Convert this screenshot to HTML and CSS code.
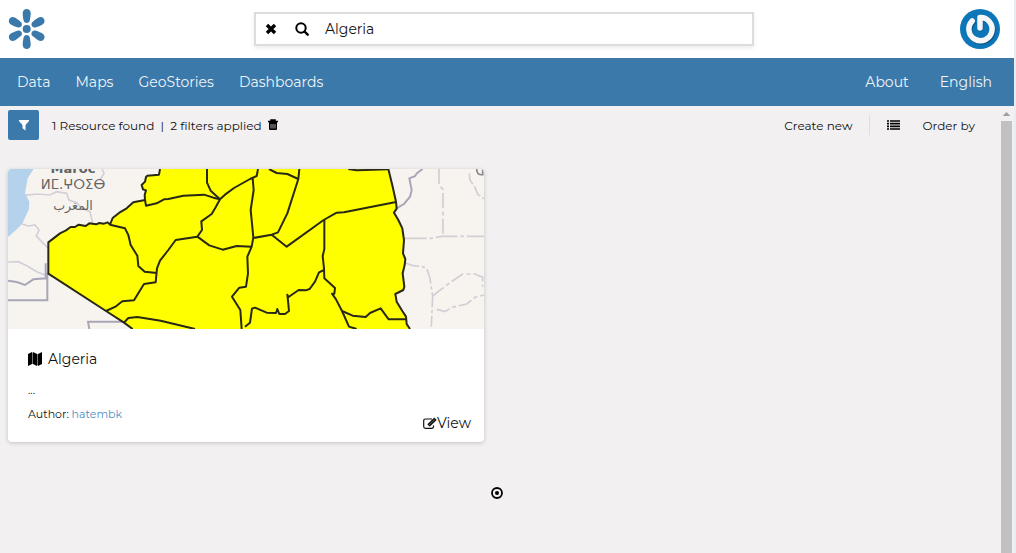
FILE: index.html
```html
<!DOCTYPE html>
<html lang="en">
<head>
<meta charset="utf-8">
<title>GeoNode</title>
<link rel="stylesheet" href="styles.css">
</head>
<body>
<div class="page">
  <header class="brand-bar">
    <a class="logo" href="#" aria-label="GeoNode home">
      <svg viewBox="0 0 38 40" width="38" height="40" fill="#3a79aa">
        <circle cx="18.700" cy="20" r="4"/>
        <g>
          <path id="petal" d="M14.700 4.500C14.500-1.500 22.900-1.500 22.700 4.500C22.700 7 22.300 8.500 21.900 11C21.500 15 15.900 15 15.500 11C15.100 8.500 14.700 7 14.700 4.500Z"/>
          <use href="#petal" transform="rotate(60 18.700 20)"/>
          <use href="#petal" transform="rotate(120 18.700 20)"/>
          <use href="#petal" transform="rotate(180 18.700 20)"/>
          <use href="#petal" transform="rotate(240 18.700 20)"/>
          <use href="#petal" transform="rotate(300 18.700 20)"/>
        </g>
      </svg>
    </a>
    <form class="search" role="search">
      <button class="icon-button" type="button" aria-label="Clear search">
        <svg viewBox="0 0 12 12" width="12" height="12"><path d="M2 2L10 10M10 2L2 10" stroke="#000" stroke-width="3.4"/></svg>
      </button>
      <button class="icon-button" type="submit" aria-label="Search">
        <svg viewBox="0 0 14 14" width="14" height="14" fill="none" stroke="#000"><circle cx="6" cy="6" r="4.7" stroke-width="2"/><path d="M9.500 9.500L12.700 12.700" stroke-width="2.400" stroke-linecap="round"/></svg>
      </button>
      <input class="search-input" type="text" value="Algeria" aria-label="Search resources">
    </form>
    <a class="avatar" href="#" aria-label="User profile">
      <svg viewBox="0 0 40 40" width="40" height="40">
        <circle cx="20" cy="20" r="20" fill="#0d76b8"/>
        <g fill="none" stroke-width="5.500" stroke-linecap="round" stroke-linejoin="round">
          <path d="M12.500 12.500A11.600 11.600 0 1 0 20 9V19" stroke="#07568c" transform="translate(.5 .8)"/>
          <path d="M12.200 12A11.600 11.600 0 1 0 20 8.500V19" stroke="#f7f7f7"/>
        </g>
      </svg>
    </a>
  </header>

  <nav class="menu-bar" aria-label="Main">
    <div class="menu-group">
      <a href="#">Data</a><a href="#">Maps</a><a href="#">GeoStories</a><a href="#">Dashboards</a>
    </div>
    <div class="menu-group menu-group-end">
      <a href="#">About</a><a href="#">English</a>
    </div>
  </nav>

  <div class="body-row">
    <main class="content">
      <div class="toolbar">
        <button class="filter-button" type="button" aria-label="Filters">
          <svg viewBox="0 0 12 12" width="12" height="12"><path d="M1.200 1H10.800Q11.500 1.500 10.900 2.200L7.500 6V11.500L4.500 9.200V6L1.100 2.200Q.5 1.500 1.200 1Z" fill="#fff"/></svg>
        </button>
        <div class="result-info">
          <span>1 Resource found</span><span class="pipe">|</span><span>2 filters applied</span>
          <button class="icon-button trash-button" type="button" aria-label="Clear filters">
            <svg viewBox="0 0 10 12" width="10" height="12"><path d="M3 2V1H7V2M0 2.500H10" fill="none" stroke="#000" stroke-width="1.500"/><path d="M1 3H9V10Q9 11 8 11H2Q1 11 1 10Z"/><path d="M3 5V9.500M5 5V9.500M7 5V9.500" stroke="#f2f0f1" stroke-width=".7"/></svg>
          </button>
        </div>
        <div class="tools">
          <button class="text-button create-button" type="button">Create new</button>
          <button class="icon-button list-button" type="button" aria-label="List view">
            <svg viewBox="0 0 13 10" width="13" height="10"><path d="M0 1H2M0 3.700H2M0 6.400H2M0 9H2M3 1H13M3 3.700H13M3 6.400H13M3 9H13" stroke="#000" stroke-width="1.700"/></svg>
          </button>
          <button class="text-button" type="button">Order by</button>
        </div>
      </div>

      <div class="card-grid">
        <article class="card">
          <svg class="card-map" viewBox="24 27 1428 480" preserveAspectRatio="xMidYMid slice" role="img" aria-label="Map of Algeria">
            <rect x="24" y="27" width="1428" height="480" fill="#f7f4f0"/>
            <path d="M24 27H101L83 55L75 100L88 125L87 148L66 192L48 210L24 231Z" fill="#b4d2ec"/>
            <g fill="none" stroke="#d3cfd8" stroke-width="5">
              <path d="M75 106L110 102L150 105L170 95L200 100L207 120L230 128L245 145L270 155L278 190M66 192L85 198L105 195L117 210L109 228L125 245L145 265M24 306L55 305L82 318L110 335L143 348"/>
              <path d="M300 60L312 40L306 27"/>
            </g>
            <g fill="none" stroke="#aaa6b8" stroke-width="6">
              <path d="M137 310V355L100 358L75 375L50 366L24 362M142 340V421H24M268 507L264 485H372"/>
              <path d="M1268 27L1250 40L1246 48L1228 55L1235 90L1230 110L1212 132L1188 146"/>
            </g>
            <g fill="none" stroke="#d1ced3" stroke-width="5">
              <path d="M1317 27V75L1329 88V229" stroke-dasharray="45 10 12 10"/>
              <path d="M1215 235H1292L1325 229H1452" stroke-dasharray="65 9 10 9"/>
              <path d="M1214 308L1240 317L1268 320L1281 327L1290 355L1298 408L1294 500" stroke-dasharray="45 8 10 8"/>
              <path d="M1298 408L1340 375L1388 342L1425 342L1448 352V380M1310 448L1335 455L1355 442L1400 432L1425 412L1452 405" stroke-dasharray="42 9 12 9"/>
              <path d="M1408 40L1410 60L1425 82L1433 103L1452 116" stroke-dasharray="35 8"/>
            </g>
            <g class="map-label" fill="#646464">
              <text x="219" y="40" font-size="39" font-weight="bold" text-anchor="middle">Maroc</text>
              <text x="219" y="87" font-size="40" text-anchor="middle">ⵍⵎ.ⵖⵔⵉⴱ</text>
              <text x="219" y="151" font-size="38" text-anchor="middle">المغرب</text>
            </g>
            <path d="M1430 27Q1430 46 1448 44V27" fill="none" stroke="#888" stroke-width="5"/>
            <path d="M480 27L477 44L442 47L438 51L435 65L425 75L429 88L438 91L434 105L435 120L400 127L380 145L358 158L338 174L330 194L323 187L312 191L298 189L288 193L268 190L257 198L236 194L225 201L212 201L198 211L180 220L145 247V341L318 453L372 488L398 507H1230L1220 492L1218 470L1207 453L1190 425L1186 402L1210 390L1213 380L1208 340L1214 315L1216 297L1209 280L1212 240L1207 205L1195 180L1182 158L1190 146L1188 125L1178 80L1165 27Z" fill="#ff0"/>
            <g fill="none" stroke="#282814" stroke-width="6" stroke-linejoin="round">
              <path d="M480 27L477 44L442 47L438 51L435 65L425 75L429 88L438 91L434 105L435 120L400 127L380 145L358 158L338 174L330 194L323 187L312 191L298 189L288 193L268 190L257 198L236 194L225 201L212 201L198 211L180 220L145 247V341L318 453L372 488L398 507M1230 507L1220 492L1218 470L1207 453L1190 425L1186 402L1210 390L1213 380L1208 340L1214 315L1216 297L1209 280L1212 240L1207 205L1195 180L1182 158L1190 146L1188 125L1178 80L1165 27"/>
              <path d="M435 120L438 137L470 130L492 118L505 117L550 107L612 104L640 113L660 118L675 104L702 84L750 57L770 48L774 27"/>
              <path d="M621 27V68L632 92L660 118L647 142L635 162L604 184L606 210L592 230L527 240L505 270L480 302L471 325L467 367L432 372L402 421L367 424L348 439L318 453"/>
              <path d="M330 194L375 205L385 225L392 255L412 287L415 318L434 335L471 339"/>
              <path d="M592 230L628 256L668 269L710 258L755 260"/>
              <path d="M758 55L761 90L752 150L760 232L755 260L742 290L744 340L738 380L718 383L696 410L721 450L725 507"/>
              <path d="M807 27L830 39L862 42L895 57L898 27M895 57L862 160L834 217L815 224L760 234M815 224L860 260L971 180L1010 158L1032 157L1188 126M1045 27L1070 31L1165 28"/>
              <path d="M973 180V268L968 288L972 325L973 355L1005 384L1003 401L996 401L1008 418L1026 453L1047 500L1070 507"/>
              <path d="M972 330L957 337L945 365L929 387L917 391L896 390L870 408L865 412L862 404L864 422L867 453L855 462L838 462L832 447L828 459L800 458L765 443L756 446L750 488L735 500"/>
              <path d="M1026 453L1058 467L1097 471L1110 459L1142 445L1166 478H1218M372 488L385 474L412 471L482 482L585 507"/>
            </g>
          </svg>
          <div class="card-body">
            <h2 class="card-title">
              <svg viewBox="0 0 14 14" width="14" height="14" aria-hidden="true"><path d="M0 2L4 0V12L0 14ZM5 0L9 2V14L5 12ZM10 2L14 0V12L10 14Z"/><path d="M4.500.5V12M9.500 2V13.500" stroke="#555" stroke-width=".8"/></svg>
              <a href="#">Algeria</a>
            </h2>
            <p class="card-summary">...</p>
            <div class="card-footer">
              <p class="card-author">Author: <a href="#">hatembk</a></p>
              <a class="view-link" href="#">
                <svg viewBox="0 0 14 13" width="14" height="13" fill="none" stroke="#111" aria-hidden="true"><path d="M9 2H2.500Q.7 2 .7 3.800V9.500Q.7 11.300 2.500 11.300H8.500Q10.500 11.300 10.500 9.500V8.500" stroke-width="1.200"/><path d="M5.500 8.500L12.500 1.800" stroke-width="3.400"/><path d="M6 8L12 2.300" stroke="#888" stroke-width=".6"/></svg>View</a>
            </div>
          </div>
        </article>
      </div>

      <div class="list-end">
        <svg viewBox="0 0 12 12" width="12" height="12" aria-hidden="true"><circle cx="6" cy="6" r="5" fill="none" stroke="#000" stroke-width="1.800"/><circle cx="6" cy="6" r="2"/></svg>
      </div>
    </main>
    <div class="scroll-track" aria-hidden="true">
      <div class="scroll-arrow"></div>
      <div class="scroll-thumb"></div>
    </div>
  </div>
</div>
</body>
</html>
```
FILE: styles.css
```css
* {
  box-sizing: border-box;
}

body {
  margin: 0;
  background: #e8edf2;
  color: #111;
  font-family: Montserrat, Inter, "Liberation Sans", sans-serif;
  font-size: 12px;
}

a {
  color: inherit;
  text-decoration: none;
}

svg {
  display: block;
  flex: none;
}

button,
input {
  border: 0;
  padding: 0;
  background: none;
  color: inherit;
  font: inherit;
}

.page {
  display: flex;
  flex-direction: column;
  min-height: 100vh;
  margin-right: 2px;
  background: #f2f0f1;
}

.brand-bar {
  display: grid;
  grid-template-columns: 1fr minmax(0, 500px) 1fr;
  align-items: center;
  height: 58px;
  padding: 0 14px 0 8px;
  background: #fff;
}

.logo {
  justify-self: start;
}

.avatar {
  justify-self: end;
}

.search {
  display: flex;
  align-items: center;
  height: 34px;
  padding-left: 9px;
  border: 2px solid #ddd;
  box-shadow: 0 2px 4px rgba(0, 0, 0, .08);
}

.search .icon-button {
  width: 30px;
}

.search-input {
  flex: 1;
  min-width: 0;
  font-size: 14px;
  outline: 0;
}

.menu-bar {
  display: flex;
  align-items: center;
  justify-content: space-between;
  height: 48px;
  padding: 0 22px 0 17px;
  background: #3a79aa;
  color: #eef4f8;
  font-size: 14px;
}

.menu-group {
  display: flex;
  gap: 25px;
}

.menu-group-end {
  gap: 31px;
}

.body-row {
  display: flex;
  flex: 1;
}

.content {
  flex: 1;
  min-width: 0;
}

.toolbar {
  display: flex;
  align-items: center;
  height: 38px;
  padding: 0 26px 0 8px;
}

.filter-button {
  display: grid;
  place-items: center;
  width: 31px;
  height: 30px;
  border-radius: 2px;
  background: #3a79aa;
}

.result-info {
  display: flex;
  align-items: center;
  margin-left: 13px;
}

.pipe {
  width: 16px;
  text-align: center;
}

.trash-button {
  margin-left: 6px;
}

.tools {
  display: flex;
  align-items: center;
  margin-left: auto;
}

.create-button {
  padding-right: 17px;
}

.list-button {
  height: 20px;
  padding: 0 22px 0 17px;
  border-left: 1px solid #ddd;
}

.card-grid {
  display: grid;
  grid-template-columns: 1fr 1fr;
  gap: 16px;
  padding: 25px 25px 0 8px;
}

.card {
  overflow: hidden;
  border-radius: 4px;
  background: #fff;
  box-shadow: 0 1px 4px rgba(0, 0, 0, .2);
}

.card-map {
  width: 100%;
  height: 160px;
}

.map-label {
  font-family: "DejaVu Sans", sans-serif;
}

.card-body {
  padding: 20px 13px 9px 20px;
}

.card-title {
  display: flex;
  align-items: center;
  gap: 6px;
  margin: 0;
  font-size: 14px;
  font-weight: 400;
  line-height: 20px;
}

.card-summary {
  margin: 13px 0 0;
  font-size: 11px;
  line-height: 16px;
}

.card-footer {
  display: flex;
  justify-content: space-between;
  align-items: flex-end;
}

.card-author {
  margin: 0 0 11px;
  font-size: 11px;
  line-height: 16px;
}

.card-author a {
  color: #4f8dbd;
}

.view-link {
  display: flex;
  align-items: center;
  margin-top: 15px;
  font-size: 14px;
  line-height: 20px;
}

.list-end {
  display: flex;
  justify-content: center;
  padding: 45px 8px 20px 0;
}

.scroll-track {
  display: flex;
  flex-direction: column;
  width: 11px;
  margin-right: 2px;
}

.scroll-arrow {
  height: 15px;
  background: #a0a0a0;
  clip-path: polygon(50% 6px, 85% 10px, 15% 10px);
}

.scroll-thumb {
  flex: 1;
  background: #c1c1c1;
}
```
